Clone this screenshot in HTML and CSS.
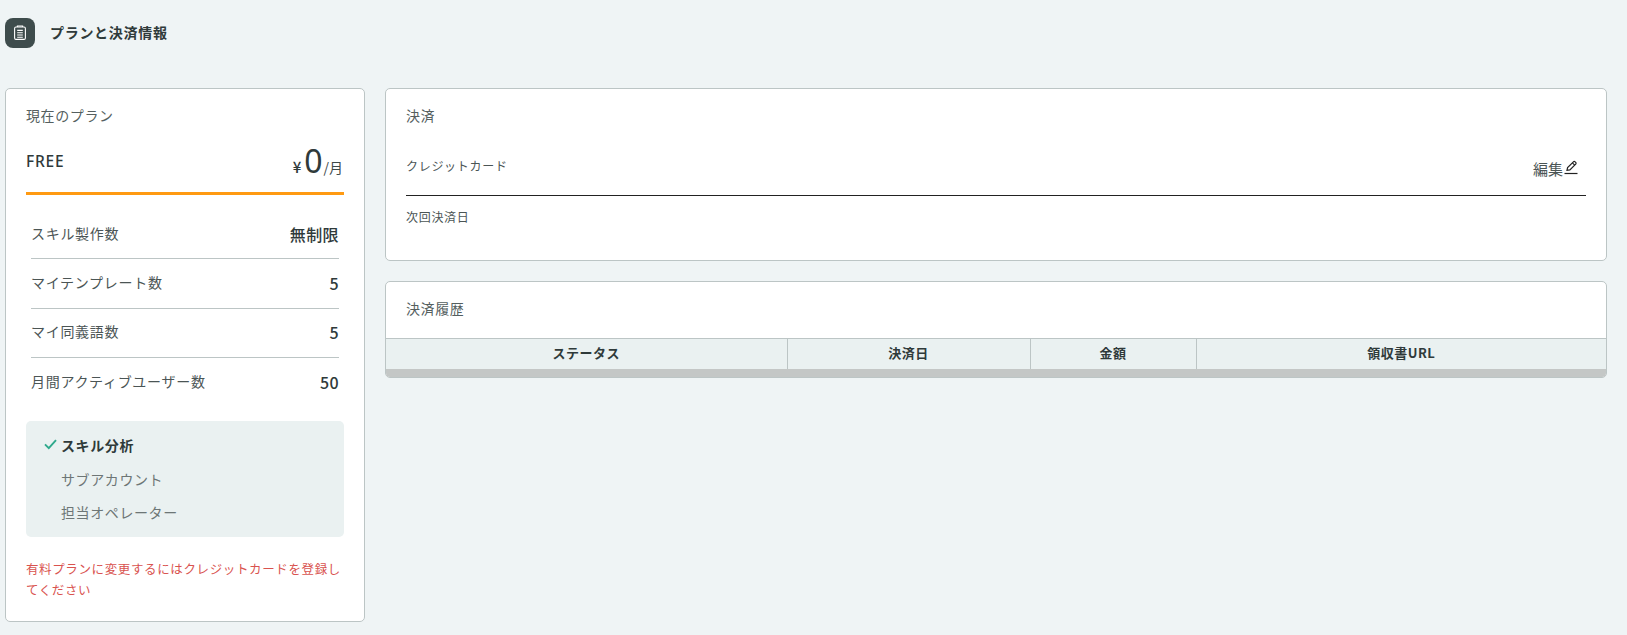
FILE: index.html
```html
<!DOCTYPE html>
<html lang="ja">
<head>
<meta charset="utf-8">
<title>プランと決済情報</title>
<link rel="stylesheet" href="styles.css">
</head>
<body>
<header class="page-head">
  <span class="head-icon">
    <svg width="14" height="16" viewBox="0 0 14 16" fill="none" stroke="#fff" stroke-width="1.1"><rect x="1.6" y="2" width="10.8" height="12.4" rx="1.4"/><path d="M4.4 2V1h5.2v1M4.2 5.4h5.6M4.2 7.7h5.6M4.2 10h5.6M4.2 12.2h5.6"/></svg>
  </span>
  <h1 class="head-title">プランと決済情報</h1>
</header>
<main class="layout">
  <section class="card plan">
    <h2 class="card-title">現在のプラン</h2>
    <div class="plan-head">
      <span class="plan-name">FREE</span>
      <span class="price"><span class="yen">¥</span><span class="amount">0</span><span class="per">/月</span></span>
    </div>
    <ul class="limits">
      <li class="limit"><span>スキル製作数</span><b>無制限</b></li>
      <li class="limit"><span>マイテンプレート数</span><b>5</b></li>
      <li class="limit"><span>マイ同義語数</span><b>5</b></li>
      <li class="limit"><span>月間アクティブユーザー数</span><b>50</b></li>
    </ul>
    <ul class="features">
      <li class="feature on">
        <svg class="check" width="13" height="11" viewBox="0 0 13 11" fill="none" stroke="#2fa98c" stroke-width="1.9"><path d="M1 5.4l3.8 3.8L12 1.2"/></svg>
        スキル分析</li>
      <li class="feature">サブアカウント</li>
      <li class="feature">担当オペレーター</li>
    </ul>
    <p class="notice">有料プランに変更するにはクレジットカードを登録してください</p>
  </section>
  <div class="side">
    <section class="card pay">
      <h2 class="card-title">決済</h2>
      <div class="pay-row">
        <span class="pay-label">クレジットカード</span>
        <a class="edit">編集<svg width="14" height="15" viewBox="0 0 14 15" fill="none" stroke="#222" stroke-width="1.2"><path d="M3 10.2l.6-2.6L9.4 1.8a1.2 1.2 0 0 1 1.7 0l.6.6a1.2 1.2 0 0 1 0 1.7L5.9 9.9z"/><path d="M8.4 2.9l2.3 2.3"/><path d="M0.5 13.5h13" stroke-width="1.2"/></svg></a>
      </div>
      <div class="pay-next">次回決済日</div>
    </section>
    <section class="card history">
      <h2 class="card-title">決済履歴</h2>
      <div class="table">
        <div class="th c1">ステータス</div>
        <div class="th c2">決済日</div>
        <div class="th c3">金額</div>
        <div class="th c4">領収書URL</div>
      </div>
      <div class="table-foot"></div>
    </section>
  </div>
</main>
</body>
</html>
```
FILE: styles.css
```css
* { box-sizing: border-box; }
html, body { margin: 0; padding: 0; }
body {
  background: #eff4f5;
  color: #2f3a3a;
  font-family: "Noto Sans CJK JP", "Noto Sans", sans-serif;
  height: 635px;
  overflow: hidden;
}
ul { list-style: none; margin: 0; padding: 0; }
h1, h2, p { margin: 0; }

.page-head {
  display: flex;
  align-items: flex-start;
  gap: 15px;
  padding: 18px 0 0 5px;
  height: 88px;
}
.head-icon {
  width: 30px;
  height: 30px;
  border-radius: 8px;
  background: #3e4c4c;
  display: flex;
  align-items: center;
  justify-content: center;
}
.head-title {
  font-size: 14px;
  font-weight: 700;
  letter-spacing: 0.7px;
  line-height: 30px;
  color: #2f3a3a;
  margin-top: -1px;
}

.layout {
  display: flex;
  align-items: flex-start;
  gap: 20px;
  padding: 0 20px 0 5px;
}
.card {
  background: #fff;
  border: 1px solid #bcc5c5;
  border-radius: 5px;
}
.card-title {
  font-size: 14px;
  font-weight: 400;
  letter-spacing: 0.6px;
  color: #555f5f;
  line-height: 20px;
}

.plan {
  width: 360px;
  height: 534px;
  padding: 16px 20px 0;
  flex: none;
}
.plan-head {
  display: flex;
  justify-content: space-between;
  align-items: center;
  height: 70px;
  padding-top: 5px;
  border-bottom: 3px solid #ff9a12;
  color: #2f3a3a;
}
.plan-name {
  font-family: "Noto Sans", sans-serif;
  font-size: 15.5px;
  font-weight: 500;
  letter-spacing: 0.8px;
}
.price { display: flex; align-items: baseline; padding-right: 1px; }
.yen { font-size: 15px; font-weight: 500; margin-right: 3px; }
.amount { font-family: "Noto Sans", sans-serif; font-size: 32px; line-height: 38px; }
.per { font-size: 14px; color: #3f4a4a; margin-left: 1px; }

.limits { padding: 0 5px; margin-top: 15px; }
.limit {
  display: flex;
  justify-content: space-between;
  align-items: center;
  height: 49.33px;
  padding-bottom: 3px;
  border-bottom: 1px solid #bcc5c5;
  font-size: 14px;
  letter-spacing: 0.7px;
  color: #4b5555;
}
.limit:last-child { border-bottom: 0; }
.limit b {
  font-size: 16px;
  font-weight: 500;
  letter-spacing: 0.4px;
  margin-top: 2px;
  color: #2f3a3a;
}

.features {
  margin-top: 14px;
  height: 116px;
  background: #eaf1f1;
  border-radius: 5px;
  padding: 8px 0 0 35px;
}
.feature {
  position: relative;
  height: 33.5px;
  line-height: 33px;
  font-size: 14px;
  letter-spacing: 0.6px;
  color: #6d7676;
}
.feature.on { font-weight: 700; color: #2f3a3a; }
.check { position: absolute; left: -17px; top: 10px; }

.notice {
  margin-top: 22px;
  font-size: 12.5px;
  line-height: 20.5px;
  letter-spacing: 0.62px;
  color: #d9534f;
}

.side {
  flex: 1;
  display: flex;
  flex-direction: column;
  gap: 20px;
}
.pay {
  height: 173px;
  padding: 16px 20px 0;
}
.pay-row {
  display: flex;
  justify-content: space-between;
  height: 38px;
  margin-top: 33px;
  border-bottom: 1px solid #222;
}
.pay-label, .pay-next {
  font-size: 12px;
  letter-spacing: 0.7px;
  color: #4b5555;
  line-height: 16px;
}
.edit {
  display: flex;
  align-items: flex-start;
  font-size: 15px;
  color: #4b5555;
  line-height: 22px;
  padding-right: 8px;
}
.edit svg { margin-top: 2px; margin-left: 1px; }
.pay-next { margin-top: 13px; }

.history { overflow: hidden; height: 97px; }
.history .card-title { padding: 16px 20px 0; height: 56px; line-height: 20px; box-sizing: border-box; }
.table {
  display: grid;
  grid-template-columns: 401.5px 243px 166px 1fr;
  height: 31px;
  border-top: 1px solid #bcc5c5;
  background: #eaf1f1;
}
.th {
  font-size: 13px;
  font-weight: 700;
  text-align: center;
  line-height: 28px;
  letter-spacing: 0.5px;
  color: #2f3a3a;
  border-right: 1px solid #bcc5c5;
}
.th.c4 { border-right: 0; }
.table-foot { height: 8px; background: #c4c7c6; }
```
